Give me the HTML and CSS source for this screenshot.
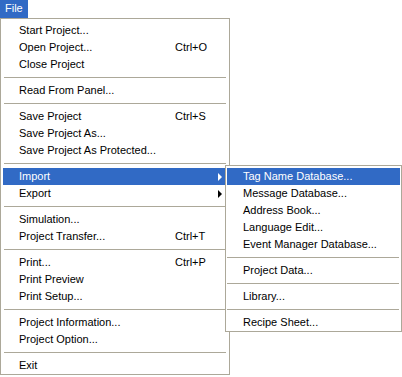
FILE: index.html
```html
<!DOCTYPE html>
<html>
<head>
<meta charset="utf-8">
<link rel="stylesheet" href="styles.css">
</head>
<body>
<div class="menubar">
  <div class="title">File</div>
</div>
<div class="stage">
  <div class="menu main">
    <div class="item"><span class="label">Start Project...</span></div>
    <div class="item"><span class="label">Open Project...</span><span class="key">Ctrl+O</span></div>
    <div class="item"><span class="label">Close Project</span></div>
    <div class="sep"></div>
    <div class="item"><span class="label">Read From Panel...</span></div>
    <div class="sep"></div>
    <div class="item"><span class="label">Save Project</span><span class="key">Ctrl+S</span></div>
    <div class="item"><span class="label">Save Project As...</span></div>
    <div class="item"><span class="label">Save Project As Protected...</span></div>
    <div class="sep"></div>
    <div class="item active"><span class="label">Import</span><span class="key"></span><span class="arrow"></span></div>
    <div class="item"><span class="label">Export</span><span class="key"></span><span class="arrow"></span></div>
    <div class="sep"></div>
    <div class="item"><span class="label">Simulation...</span></div>
    <div class="item"><span class="label">Project Transfer...</span><span class="key">Ctrl+T</span></div>
    <div class="sep"></div>
    <div class="item"><span class="label">Print...</span><span class="key">Ctrl+P</span></div>
    <div class="item"><span class="label">Print Preview</span></div>
    <div class="item"><span class="label">Print Setup...</span></div>
    <div class="sep"></div>
    <div class="item"><span class="label">Project Information...</span></div>
    <div class="item"><span class="label">Project Option...</span></div>
    <div class="sep"></div>
    <div class="item"><span class="label">Exit</span></div>
  </div>
  <div class="menu sub">
    <div class="item active"><span class="label">Tag Name Database...</span></div>
    <div class="item"><span class="label">Message Database...</span></div>
    <div class="item"><span class="label">Address Book...</span></div>
    <div class="item"><span class="label">Language Edit...</span></div>
    <div class="item"><span class="label">Event Manager Database...</span></div>
    <div class="sep"></div>
    <div class="item"><span class="label">Project Data...</span></div>
    <div class="sep"></div>
    <div class="item"><span class="label">Library...</span></div>
    <div class="sep"></div>
    <div class="item"><span class="label">Recipe Sheet...</span></div>
  </div>
</div>
</body>
</html>
```

FILE: styles.css
```css
html, body {
  margin: 0;
  padding: 0;
  background: #ffffff;
}
body {
  font-family: "Liberation Sans", Arial, sans-serif;
  font-size: 11px;
  color: #000000;
}
.menubar {
  display: flex;
  height: 18px;
}
.title {
  width: 28px;
  height: 18px;
  line-height: 17px;
  background: #316ac5;
  color: #ffffff;
  box-sizing: border-box;
  padding-left: 5px;
}
.stage {
  position: relative;
}
.menu {
  box-sizing: border-box;
  border: 1px solid #aca899;
  background: #ffffff;
}
.main {
  width: 230px;
  padding: 3px 4px 0 2px;
}
.sub {
  position: absolute;
  left: 225px;
  top: 147px;
  width: 177px;
  padding: 2px 1px 0 1px;
}
.item {
  display: flex;
  align-items: center;
  height: 17px;
  line-height: 17px;
  padding-left: 16px;
  white-space: nowrap;
}
.main .label {
  width: 156px;
}
.key {
  flex: 1;
}
.arrow {
  width: 0;
  height: 0;
  border-top: 4px solid transparent;
  border-bottom: 4px solid transparent;
  border-left: 4px solid #000000;
  margin-right: 3px;
}
.active {
  background: #316ac5;
  color: #ffffff;
}
.active .arrow {
  border-left-color: #ffffff;
}
.sep {
  height: 9px;
  position: relative;
}
.sep::after {
  content: "";
  position: absolute;
  left: 1px;
  right: -1px;
  top: 4px;
  height: 1px;
  background: #aca899;
}
.sub .sep::after {
  left: 0;
  right: 1px;
}
```
